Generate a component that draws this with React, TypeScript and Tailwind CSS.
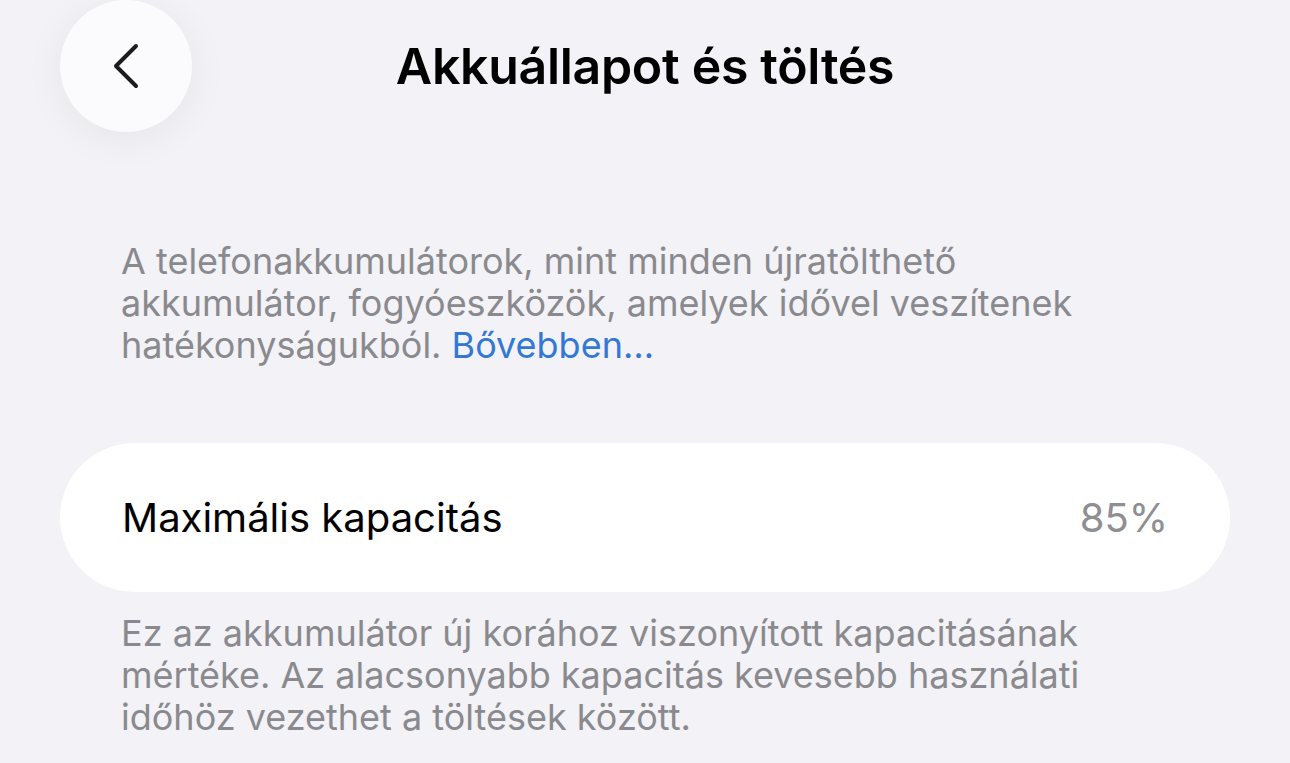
import React from 'react';

const font = { fontFamily: 'Inter, "Noto Sans", sans-serif' };

function BackButton() {
  return (
    <button className="w-[132px] h-[132px] rounded-full bg-[#fbfbfd] flex items-center justify-center shadow-[0_6px_40px_rgba(0,0,0,0.06)]">
      <svg width="30" height="46" viewBox="0 0 30 46" fill="none">
        <path d="M25 3 L5 23 L25 43" stroke="#1c1c1e" strokeWidth="4" strokeLinecap="round" strokeLinejoin="round" />
      </svg>
    </button>
  );
}

export default function App() {
  return (
    <div className="w-[1290px] h-[763px] bg-[#f2f2f7] overflow-hidden text-black" style={font}>
      {/* Header */}
      <div className="relative h-[132px] px-[60px] flex items-center">
        <BackButton />
        <h1 className="absolute left-0 right-0 top-[37px] text-center text-[50px] leading-[58px] font-semibold tracking-[-0.3px] pointer-events-none">
          Akkuállapot és töltés
        </h1>
      </div>

      {/* Intro */}
      <p className="mt-[108px] pl-[121px] pr-[200px] text-[36px] leading-[42px] text-[#8a8a8e]">
        A telefonakkumulátorok, mint minden újratölthető akkumulátor, fogyóeszközök, amelyek idővel veszítenek hatékonyságukból.{' '}
        <span className="text-[#3478d6]">Bővebben…</span>
      </p>

      {/* Card */}
      <div className="mt-[77px] mx-[60px] w-[1170px] h-[149px] bg-white rounded-full flex items-center justify-between px-[62px]">
        <span className="text-[40px]">Maximális kapacitás</span>
        <span className="text-[40px] text-[#8e8e93]">85%</span>
      </div>

      {/* Footnote */}
      <p className="mt-[20px] pl-[121px] pr-[200px] text-[36px] leading-[42px] text-[#8a8a8e]">
        Ez az akkumulátor új korához viszonyított kapacitásának mértéke. Az alacsonyabb kapacitás kevesebb használati időhöz vezethet a töltések között.
      </p>
    </div>
  );
}
